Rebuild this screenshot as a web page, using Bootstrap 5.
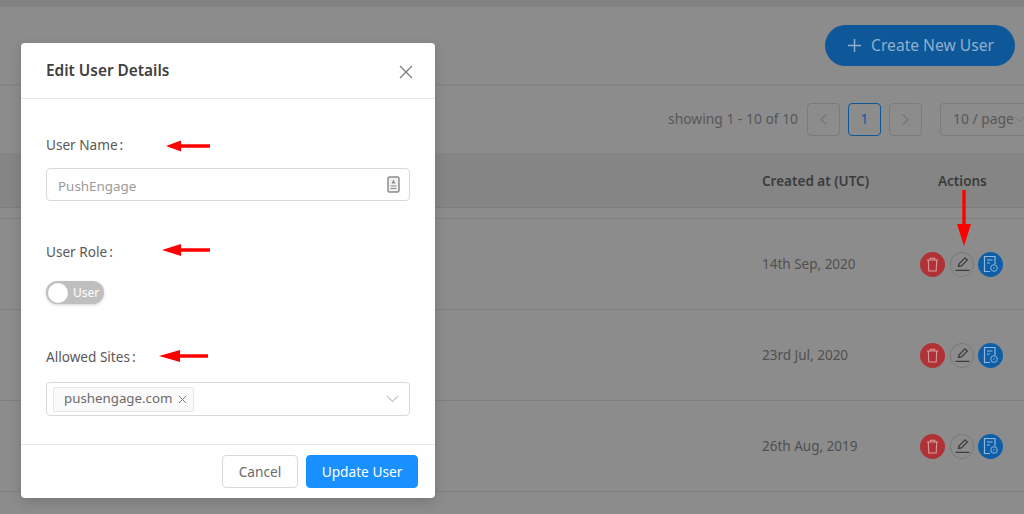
<!DOCTYPE html>
<html lang="en">
<head>
<meta charset="utf-8">
<title>Edit User Details</title>
<link rel="stylesheet" href="https://cdn.jsdelivr.net/npm/bootstrap@5.3.0/dist/css/bootstrap.min.css">
<style>
html,body{height:514px;overflow:hidden}
body{background:#8c8c8c;font-family:"Noto Sans","Open Sans",sans-serif;font-size:14px;color:#4a4a4a;width:1024px}
.top-strip{height:7px;background:#828282}
.head-zone{height:79px;border-bottom:2px solid #858585;padding:18px 9px 0 0}
.create-pill{height:41px;width:190px;border-radius:21px;background:#0e5798;color:#8fb0cc;font-size:15.6px;border:0;gap:9px;padding:0 0 0 1px}
.pager-zone{height:67px;padding:17px 0 0 668px;color:#575757;font-size:13.85px;gap:8px}
.pg-info{width:131px;height:33px;white-space:nowrap;flex:none}
.pg-box{width:33px;height:33px;border:1px solid #7b7b7b;border-radius:4px;color:#6d6d6d;flex:none}
.pg-current{border-color:#0e5798;color:#0e5798}
.pg-size{width:100px;height:33px;border:1px solid #7b7b7b;border-radius:4px;margin-left:10px;padding-left:12px;white-space:nowrap;flex:none}
.pg-size svg{flex:none}
.head-row{height:55px;background:#858585;border-bottom:1px solid #7c7c7c;font-weight:600;color:#3b3b3b;font-size:13.5px;padding-top:2px}
.gap-row{height:11px;border-bottom:1px solid #7f7f7f}
.data-row{height:91px;border-bottom:1px solid #7f7f7f;color:#505050;font-size:13.5px}
.cell-date{width:159px;margin-left:762px;flex:none;white-space:nowrap}
.cell-act{gap:4px;margin-left:-1px;flex:none}
.rnd{width:25px;height:25px;border-radius:50%;flex:none}
.rnd-red{background:#b03236}
.rnd-plain{width:24px;margin-left:1px;border:1px solid #7a7a7a}
.rnd-blue{background:#0e5fa8}
.th-act{margin-left:17px}
.edit-dialog{position:absolute;left:21px;top:43px;width:414px;height:455px;border:0;border-radius:4px;box-shadow:0 4px 12px rgba(0,0,0,.15);overflow:hidden;color:#595959}
.edit-dialog .modal-header{height:56px;padding:2px 22px 0 25px;border-bottom:1px solid #e8e8e8;flex:none}
.edit-title{font-size:15.4px;font-weight:600;color:#404040;margin:0}
.edit-dialog .modal-body{padding:0 25px;flex:1 1 auto}
.fld-label{font-size:13.6px;color:#595959;height:22px;line-height:22px;white-space:nowrap;margin:0}
.lab-colon{margin-left:2px}
.name-label{margin-top:35px}
.role-label{margin-top:40px}
.site-label{margin-top:42px}
.txt-box{height:33px;margin-top:12px;border:1px solid #d9d9d9;border-radius:4px;padding:0 9px 0 11px;color:#9a9a9a;font-size:13.4px}
.txt-val{padding-top:3px}
.sw{width:58px;height:23px;border-radius:12px;background:#bfbfbf;margin-top:18px;padding:2px;color:#fff;font-size:12px;gap:5px;box-shadow:0 1px 3px rgba(0,0,0,.18)}
.sw-knob{width:20px;height:20px;border-radius:50%;background:#fff;flex:none}
.sel-box{height:34px;margin-top:14px;border:1px solid #d9d9d9;border-radius:4px;padding:0 10px 0 6px}
.chip{height:25px;background:#fafafa;border:1px solid #e8e8e8;border-radius:2px;padding:0 6px 0 10px;color:#6b6b6b;font-size:13.3px;gap:6px}
.edit-dialog .modal-footer{height:54px;padding:0 17px;border-top:1px solid #e8e8e8;gap:8px;flex:none;flex-wrap:nowrap}
.btn-cancel,.btn-update{height:33px;font-size:13.7px;border-radius:4px;padding:2px 0 0;margin:0}
.btn-cancel{width:76px;background:#fff;border:1px solid #d9d9d9;color:#6b6b6b}
.btn-update{width:112px;background:#1890ff;border:1px solid #1890ff;color:#fff}
.arrow-mark{position:absolute;overflow:visible}
</style>
</head>
<body>
<svg width="0" height="0" class="d-none">
  <symbol id="ic-trash" viewBox="0 0 13 15"><path d="M.8 3h11.400M4.300 3V1.200h4.400V3M2.300 3l.5 11h7.400l.5-11" stroke="#d99a9c" stroke-width="1.100" fill="none"/></symbol>
  <symbol id="ic-edit" viewBox="0 0 17 16"><path d="M4.500 10.500l.6-2.800 5.900-5.900 2.300 2.300-5.900 5.900zM1.500 14.300h14" stroke="#3c3c3c" stroke-width="1.300" fill="none"/></symbol>
  <symbol id="ic-doc" viewBox="0 0 17 18"><path d="M8 16.500H2.500V1.500h10.500V9M5 5h5.500M5 8h3" stroke="#8fb6d8" stroke-width="1.200" fill="none"/><circle cx="12" cy="13" r="3.300" stroke="#8fb6d8" fill="none"/><path d="M11 14l2-2" stroke="#8fb6d8" stroke-width=".8"/></symbol>
</svg>
<div class="top-strip"></div>
<div class="head-zone d-flex justify-content-end">
  <button class="create-pill d-flex align-items-center justify-content-center" type="button">
    <svg width="15" height="15" viewBox="0 0 15 15"><path d="M7.500 1v13M1 7.500h13" stroke="#8fb0cc" stroke-width="1.500" fill="none"/></svg>
    <span>Create New User</span>
  </button>
</div>
<div class="pager-zone d-flex align-items-start">
  <span class="pg-info d-flex align-items-center">showing 1 - 10 of 10</span>
  <span class="pg-box d-flex align-items-center justify-content-center"><svg width="9" height="13" viewBox="0 0 9 13"><path d="M7 1.500 2 6.500l5 5" stroke="#757575" fill="none" stroke-width="1.200"/></svg></span>
  <span class="pg-box pg-current d-flex align-items-center justify-content-center">1</span>
  <span class="pg-box d-flex align-items-center justify-content-center"><svg width="9" height="13" viewBox="0 0 9 13"><path d="M2 1.500l5 5-5 5" stroke="#757575" fill="none" stroke-width="1.200"/></svg></span>
  <span class="pg-size d-flex align-items-center">10 / page<svg width="11" height="7" viewBox="0 0 11 7"><path d="M1 1l4.500 4.500L10 1" stroke="#757575" fill="none"/></svg></span>
</div>
<div class="head-row d-flex align-items-center">
  <span class="cell-date">Created at (UTC)</span>
  <span class="th-act">Actions</span>
</div>
<div class="gap-row"></div>
<div class="data-row d-flex align-items-center">
  <span class="cell-date">14th Sep, 2020</span>
  <span class="cell-act d-flex">
    <span class="rnd rnd-red d-flex align-items-center justify-content-center"><svg width="13" height="15"><use href="#ic-trash"/></svg></span>
    <span class="rnd rnd-plain d-flex align-items-center justify-content-center"><svg width="17" height="16"><use href="#ic-edit"/></svg></span>
    <span class="rnd rnd-blue d-flex align-items-center justify-content-center"><svg width="17" height="18"><use href="#ic-doc"/></svg></span>
  </span>
</div>
<div class="data-row d-flex align-items-center">
  <span class="cell-date">23rd Jul, 2020</span>
  <span class="cell-act d-flex">
    <span class="rnd rnd-red d-flex align-items-center justify-content-center"><svg width="13" height="15"><use href="#ic-trash"/></svg></span>
    <span class="rnd rnd-plain d-flex align-items-center justify-content-center"><svg width="17" height="16"><use href="#ic-edit"/></svg></span>
    <span class="rnd rnd-blue d-flex align-items-center justify-content-center"><svg width="17" height="18"><use href="#ic-doc"/></svg></span>
  </span>
</div>
<div class="data-row d-flex align-items-center">
  <span class="cell-date">26th Aug, 2019</span>
  <span class="cell-act d-flex">
    <span class="rnd rnd-red d-flex align-items-center justify-content-center"><svg width="13" height="15"><use href="#ic-trash"/></svg></span>
    <span class="rnd rnd-plain d-flex align-items-center justify-content-center"><svg width="17" height="16"><use href="#ic-edit"/></svg></span>
    <span class="rnd rnd-blue d-flex align-items-center justify-content-center"><svg width="17" height="18"><use href="#ic-doc"/></svg></span>
  </span>
</div>

<div class="modal-content edit-dialog bg-white">
  <div class="modal-header d-flex justify-content-between align-items-center">
    <h5 class="edit-title">Edit User Details</h5>
    <svg width="14" height="14" viewBox="0 0 14 14"><path d="M1 1l12 12M13 1 1 13" stroke="#7d7d7d" stroke-width="1.300" fill="none"/></svg>
  </div>
  <div class="modal-body">
    <p class="fld-label name-label">User Name<span class="lab-colon">:</span></p>
    <div class="txt-box d-flex align-items-center justify-content-between">
      <span class="txt-val">PushEngage</span>
      <svg width="13" height="17" viewBox="0 0 13 17"><rect x="1" y="1" width="11" height="15" rx="1.500" stroke="#8c8c8c" stroke-width="1.500" fill="#f0f0f0"/><path d="M6.500 3.500 8.500 7.500h-4zM3.500 9.500h6v1h-6zM3.500 12h6v1h-6z" fill="#8c8c8c"/></svg>
    </div>
    <p class="fld-label role-label">User Role<span class="lab-colon">:</span></p>
    <div class="sw d-flex align-items-center"><span class="sw-knob"></span><span>User</span></div>
    <p class="fld-label site-label">Allowed Sites<span class="lab-colon">:</span></p>
    <div class="sel-box d-flex align-items-center justify-content-between">
      <span class="chip d-inline-flex align-items-center">pushengage.com<svg width="9" height="9" viewBox="0 0 9 9"><path d="M1 1l7 7M8 1 1 8" stroke="#7d7d7d" fill="none"/></svg></span>
      <svg width="13" height="8" viewBox="0 0 13 8"><path d="M1 1l5.500 5.500L12 1" stroke="#c4c4c4" stroke-width="1.100" fill="none"/></svg>
    </div>
  </div>
  <div class="modal-footer d-flex justify-content-end align-items-center">
    <button class="btn btn-cancel" type="button">Cancel</button>
    <button class="btn btn-update" type="button">Update User</button>
  </div>
</div>

<svg class="arrow-mark" style="left:165px;top:138px" width="46" height="16" viewBox="0 0 46 16"><path d="M1 8 16 2.500v3.800h29v3.400H16v3.800z" fill="#f00"/></svg>
<svg class="arrow-mark" style="left:161px;top:242px" width="50" height="16" viewBox="0 0 50 16"><path d="M1 8 20 2v4.300h29v3.400H20V14z" fill="#f00"/></svg>
<svg class="arrow-mark" style="left:158px;top:348px" width="51" height="16" viewBox="0 0 51 16"><path d="M1 8 22 2v4.300h28v3.400H22V14z" fill="#f00"/></svg>
<svg class="arrow-mark" style="left:956px;top:189px" width="16" height="58" viewBox="0 0 16 58"><path d="M6.300 1h3.400v34H15L8 57 1 35h5.300z" fill="#f00"/></svg>
<script src="https://cdn.jsdelivr.net/npm/bootstrap@5.3.0/dist/js/bootstrap.bundle.min.js"></script>
</body>
</html>
